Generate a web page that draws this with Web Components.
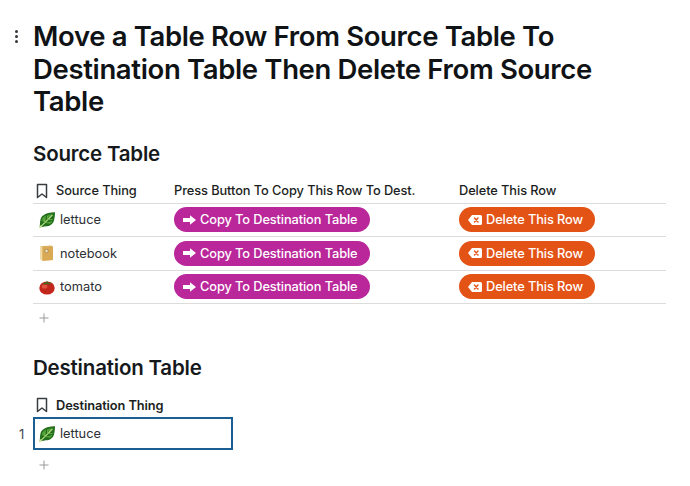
<!DOCTYPE html>
<html>
<head>
<meta charset="utf-8">
<style>
	html, body { margin: 0; background: #fff; }
	body { font-family: Inter, "Liberation Sans", sans-serif; color: #16191c; overflow: hidden; }
</style>
</head>
<body>

<coda-page>
	<doc-title>Move a Table Row From Source Table To Destination Table Then Delete From Source Table</doc-title>

	<section-title style="margin-top:22px">Source Table</section-title>
	<doc-table class="source" style="margin-top:11px">
		<table-head>
			<head-cell name>Source Thing</head-cell>
			<head-cell>Press Button To Copy This Row To Dest.</head-cell>
			<head-cell>Delete This Row</head-cell>
		</table-head>
		<table-row><thing-cell icon="lettuce">lettuce</thing-cell><action-button kind="copy">Copy To Destination Table</action-button><action-button kind="delete">Delete This Row</action-button></table-row>
		<table-row><thing-cell icon="notebook">notebook</thing-cell><action-button kind="copy">Copy To Destination Table</action-button><action-button kind="delete">Delete This Row</action-button></table-row>
		<table-row><thing-cell icon="tomato">tomato</thing-cell><action-button kind="copy">Copy To Destination Table</action-button><action-button kind="delete">Delete This Row</action-button></table-row>
		<add-row></add-row>
	</doc-table>

	<section-title style="margin-top:19px">Destination Table</section-title>
	<doc-table style="margin-top:11px">
		<table-head plain><head-cell name bold>Destination Thing</head-cell></table-head>
		<selected-row number="1"><thing-cell icon="lettuce">lettuce</thing-cell></selected-row>
		<add-row style="padding-top:10px"></add-row>
	</doc-table>
</coda-page>

<script>
const ICONS = {
	lettuce: `<svg viewBox="0 0 16 16" width="16" height="16">
		<path d="M.5 15.500 C1 13.500 .8 12 1.200 9 C1.600 6 3 3.500 5 3 C6 1.500 8 1.500 9.500 1 C11.500 .4 14 .2 16 .3 C16 3 15.800 5 15.300 7 C15 9.500 14 11.500 12.300 12.500 C10.500 14 8.500 14.300 7 14.300 C5 14.800 3 14.800 2 15.300 Z" fill="#236f1c"/>
		<path d="M2.500 9 C3 6 5 4 7 3.500 L6.500 10.500 Z M8 3.200 L13 2 L10.500 7.500 Z M8 11 L13.500 8.500 L12 11.500 Z" fill="#4c9a35"/>
		<path d="M.8 15.300 C4 12.500 8.500 8 13.500 2.800" fill="none" stroke="#b5dd80" stroke-width="1.200"/>
		<path d="M5.500 10.500 L5 6 M8.500 7.500 L8.500 4 M5.500 10.500 L11 11 M8.500 7.500 L13.500 7.500" fill="none" stroke="#7dbb55" stroke-width=".7"/>
		<path d="M.3 15.800 L2.300 13.800" stroke="#d0e6a0" stroke-width="1.400"/>
	</svg>`,
	notebook: `<svg viewBox="0 0 16 16" width="16" height="16">
		<path d="M1.500 1.200 L12.500 .5 L14 1.800 L14 15 L3.500 15.800 L1.500 14.300 Z" fill="#dcb063"/>
		<path d="M1.500 1.200 L3.500 2.300 L3.500 15.800 L1.500 14.300 Z" fill="#f1dca6"/>
		<path d="M3.500 2.300 L14 1.800 L14 15 L3.500 15.800 Z" fill="#d9a954"/>
		<circle cx="7.500" cy="6" r="1.700" fill="#f3e6c4" stroke="#8e7140" stroke-width=".6"/>
	</svg>`,
	tomato: `<svg viewBox="0 0 16 16" width="16" height="16">
		<ellipse cx="8" cy="9" rx="7.700" ry="6.600" fill="#c3261b"/>
		<ellipse cx="5.500" cy="7.500" rx="2.800" ry="2" fill="#ea6a4f" opacity=".7"/>
		<path d="M3.500 4 L6.500 3.800 L8 2 L9.500 3.800 L12.500 3.600 L10.500 5.500 L8 5 L5.500 5.500 Z" fill="#3f6a20"/>
	</svg>`
};

// Small helper: each element is a template string and a shadow root
function define(name, html, render) {
	customElements.define(name, class extends HTMLElement {
		connectedCallback() {
			if (this.shadowRoot) return;
			this.attachShadow({ mode: 'open' });
			this.shadowRoot.innerHTML = render ? render(this) : html;
		}
	});
}

const BOOKMARK = `<svg viewBox="0 0 14 16" width="14" height="16" fill="none" stroke="#3a3d40" stroke-width="1.500" stroke-linejoin="round"><path d="M2.500 1.500 H11.500 V14.500 L7 11 L2.500 14.500 Z"/></svg>`;

define('coda-page', `<style>
	:host { display: block; padding: 20px 24px 0 33px; position: relative; }
	.menu { position: absolute; left: 15px; top: 29.500px; width: 3px; display: flex; flex-direction: column; gap: 2px; }
	.menu i { width: 3px; height: 3px; border-radius: 50%; background: #33373b; }
</style><div class="menu"><i></i><i></i><i></i></div><slot></slot>`);

define('doc-title', `<style>
	:host { display: block; font-size: 27.500px; line-height: 32.500px; font-weight: 600; letter-spacing: -.35px; color: #101316; width: 620px; }
</style><slot></slot>`);

define('section-title', `<style>
	:host { display: block; font-size: 20.500px; line-height: 28px; font-weight: 600; letter-spacing: -.2px; color: #16191c; }
</style><slot></slot>`);

define('doc-table', `<style>:host { display: block; width: 633px; }</style><slot></slot>`);

define('table-head', null, el => `<style>
	:host { display: grid; grid-template-columns: 141px 285px 1fr; align-items: center; height: 25px; box-sizing: border-box; ${el.hasAttribute('plain') ? 'height: 24px;' : 'border-bottom: 1px solid #dcdcdc;'} }
</style><slot></slot>`);

define('head-cell', null, el => `<style>
	:host { display: flex; align-items: center; gap: 7px; font-size: 12.800px; font-weight: 500; letter-spacing: -.08px; color: #1b1e21; white-space: nowrap; ${el.hasAttribute('name') ? 'padding-left: 2px;' : ''} ${el.hasAttribute('bold') ? 'font-weight: 600; letter-spacing: -.1px;' : ''} }
	svg { flex: none; }
</style>${el.hasAttribute('name') ? BOOKMARK : ''}<slot></slot>`);

define('table-row', `<style>
	:host { display: grid; grid-template-columns: 141px 285px 1fr; align-items: center; height: 33.500px; box-sizing: border-box; border-bottom: 1px solid #dcdcdc; }
</style><slot></slot>`);

define('thing-cell', null, el => `<style>
	:host { display: flex; align-items: center; gap: 5px; padding-left: 6px; font-size: 12.800px; color: #2c3034; white-space: nowrap; }
	svg { display: block; flex: none; }
</style>${ICONS[el.getAttribute('icon')]}<slot></slot>`);

define('action-button', null, el => {
	const copy = el.getAttribute('kind') === 'copy';
	const icon = copy
		? `<svg viewBox="0 0 13 10" width="13" height="10"><path d="M0 3 H7 V.3 L13 5 L7 9.700 V7 H0 Z" fill="#fff"/></svg>`
		: `<svg viewBox="0 0 14 10" width="14" height="10"><path d="M4 0 H12.500 A1.500 1.500 0 0 1 14 1.500 V8.500 A1.500 1.500 0 0 1 12.500 10 H4 L0 5 Z" fill="#fff"/><path d="M6.500 3 L10 7 M10 3 L6.500 7" stroke="#e35316" stroke-width="1.400" stroke-linecap="round"/></svg>`;
	return `<style>
		:host { display: inline-flex; justify-self: start; align-items: center; gap: 4px; height: 25px; box-sizing: border-box; padding: 0 12px 0 9px; border-radius: 13px; background: ${copy ? '#b9279a' : '#e35316'}; color: #fff; font-size: 12.800px; font-weight: 500; letter-spacing: -.1px; white-space: nowrap; }
		svg { flex: none; display: block; }
	</style>${icon}<slot></slot>`;
});

define('add-row', `<style>
	:host { display: block; height: 31px; padding: 9px 0 0 5.500px; box-sizing: border-box; }
	svg { display: block; }
</style><svg viewBox="0 0 10 10" width="10" height="10"><path d="M5 .5 V9.500 M.5 5 H9.500" stroke="#9a9a9a" stroke-width="1"/></svg>`);

define('selected-row', null, el => `<style>
	:host { display: flex; align-items: center; position: relative; width: 200px; height: 33px; box-sizing: border-box; border: 2px solid #1b5e93; }
	.num { position: absolute; left: -16px; top: 0; bottom: 0; display: flex; align-items: center; font-size: 13px; color: #44484c; }
	::slotted(thing-cell) { padding-left: 4px; }
</style><span class="num">${el.getAttribute('number')}</span><slot></slot>`);
</script>
</body>
</html>
